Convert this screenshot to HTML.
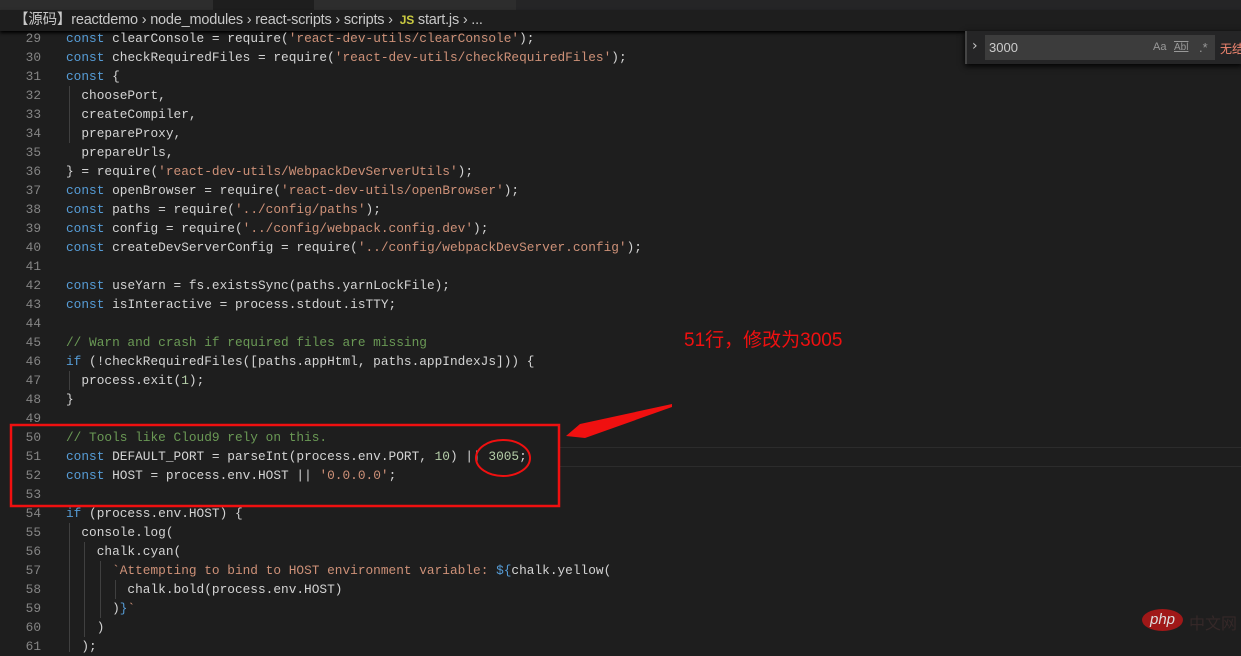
<!DOCTYPE html><html><head><meta charset="utf-8"><style>
body{margin:0;width:1241px;height:652px;background:#1e1e1e;overflow:hidden;position:relative;font-family:"Liberation Mono",monospace}
.tabs{position:absolute;left:0;top:0;width:1241px;height:10px;background:#252526}
.tabs div{position:absolute;top:0;height:10px;background:#2d2d2d;border-right:1px solid #252526}
.bc{position:absolute;left:0;top:10px;width:1241px;height:21px;background:#1e1e1e;box-shadow:0 2px 3px #000;font:14.5px "Liberation Sans","Noto Sans CJK SC",sans-serif;color:#c8c8c8;line-height:21px;padding-left:14px;box-sizing:border-box;letter-spacing:-.2px;white-space:nowrap}
.l{position:absolute;left:0;height:19px;line-height:19px;font-size:12.8px;white-space:pre;color:#d4d4d4}
.n{position:absolute;left:0;width:41px;text-align:right;color:#858585}
.c{position:absolute;left:66px}
.k{color:#569cd6}.s{color:#ce9178}.m{color:#6a9955}.d{color:#b5cea8}
.g{position:absolute;width:1px;background:#404040}
</style></head><body>
<div class="tabs"><div style="left:0;width:99px"></div><div style="left:99px;width:114px"></div><div style="left:213px;width:101px;background:#1e1e1e"></div><div style="left:314px;width:101px"></div><div style="left:415px;width:101px"></div></div>
<div class="bc">【源码】reactdemo › node_modules › react-scripts › scripts › <span style="color:#cbcb41;font-weight:bold;font-size:12px">&nbsp;JS</span> start.js › ...</div>
<div style="position:absolute;left:560px;top:447px;width:681px;height:18px;border-top:1px solid #2c2c2c;border-bottom:1px solid #2c2c2c"></div>
<div class="g" style="left:69px;top:86px;height:57px"></div>
<div class="g" style="left:69px;top:371px;height:19px"></div>
<div class="g" style="left:69px;top:523px;height:129px"></div>
<div class="g" style="left:84px;top:542px;height:95px"></div>
<div class="g" style="left:100px;top:561px;height:57px"></div>
<div class="g" style="left:115px;top:580px;height:19px"></div>
<div class="l" style="top:29px"><span class="n">29</span><span class="c"><span class="k">const</span> clearConsole = require(<span class="s">'react-dev-utils/clearConsole'</span>);</span></div>
<div class="l" style="top:48px"><span class="n">30</span><span class="c"><span class="k">const</span> checkRequiredFiles = require(<span class="s">'react-dev-utils/checkRequiredFiles'</span>);</span></div>
<div class="l" style="top:67px"><span class="n">31</span><span class="c"><span class="k">const</span> {</span></div>
<div class="l" style="top:86px"><span class="n">32</span><span class="c">  choosePort,</span></div>
<div class="l" style="top:105px"><span class="n">33</span><span class="c">  createCompiler,</span></div>
<div class="l" style="top:124px"><span class="n">34</span><span class="c">  prepareProxy,</span></div>
<div class="l" style="top:143px"><span class="n">35</span><span class="c">  prepareUrls,</span></div>
<div class="l" style="top:162px"><span class="n">36</span><span class="c">} = require(<span class="s">'react-dev-utils/WebpackDevServerUtils'</span>);</span></div>
<div class="l" style="top:181px"><span class="n">37</span><span class="c"><span class="k">const</span> openBrowser = require(<span class="s">'react-dev-utils/openBrowser'</span>);</span></div>
<div class="l" style="top:200px"><span class="n">38</span><span class="c"><span class="k">const</span> paths = require(<span class="s">'../config/paths'</span>);</span></div>
<div class="l" style="top:219px"><span class="n">39</span><span class="c"><span class="k">const</span> config = require(<span class="s">'../config/webpack.config.dev'</span>);</span></div>
<div class="l" style="top:238px"><span class="n">40</span><span class="c"><span class="k">const</span> createDevServerConfig = require(<span class="s">'../config/webpackDevServer.config'</span>);</span></div>
<div class="l" style="top:257px"><span class="n">41</span></div>
<div class="l" style="top:276px"><span class="n">42</span><span class="c"><span class="k">const</span> useYarn = fs.existsSync(paths.yarnLockFile);</span></div>
<div class="l" style="top:295px"><span class="n">43</span><span class="c"><span class="k">const</span> isInteractive = process.stdout.isTTY;</span></div>
<div class="l" style="top:314px"><span class="n">44</span></div>
<div class="l" style="top:333px"><span class="n">45</span><span class="c"><span class="m">// Warn and crash if required files are missing</span></span></div>
<div class="l" style="top:352px"><span class="n">46</span><span class="c"><span class="k">if</span> (!checkRequiredFiles([paths.appHtml, paths.appIndexJs])) {</span></div>
<div class="l" style="top:371px"><span class="n">47</span><span class="c">  process.exit(<span class="d">1</span>);</span></div>
<div class="l" style="top:390px"><span class="n">48</span><span class="c">}</span></div>
<div class="l" style="top:409px"><span class="n">49</span></div>
<div class="l" style="top:428px"><span class="n">50</span><span class="c"><span class="m">// Tools like Cloud9 rely on this.</span></span></div>
<div class="l" style="top:447px"><span class="n">51</span><span class="c"><span class="k">const</span> DEFAULT_PORT = parseInt(process.env.PORT, <span class="d">10</span>) || <span class="d">3005</span>;</span></div>
<div class="l" style="top:466px"><span class="n">52</span><span class="c"><span class="k">const</span> HOST = process.env.HOST || <span class="s">'0.0.0.0'</span>;</span></div>
<div class="l" style="top:485px"><span class="n">53</span></div>
<div class="l" style="top:504px"><span class="n">54</span><span class="c"><span class="k">if</span> (process.env.HOST) {</span></div>
<div class="l" style="top:523px"><span class="n">55</span><span class="c">  console.log(</span></div>
<div class="l" style="top:542px"><span class="n">56</span><span class="c">    chalk.cyan(</span></div>
<div class="l" style="top:561px"><span class="n">57</span><span class="c">      <span class="s">`Attempting to bind to HOST environment variable: </span><span class="k">${</span>chalk.yellow(</span></div>
<div class="l" style="top:580px"><span class="n">58</span><span class="c">        chalk.bold(process.env.HOST)</span></div>
<div class="l" style="top:599px"><span class="n">59</span><span class="c">      )<span class="k">}</span><span class="s">`</span></span></div>
<div class="l" style="top:618px"><span class="n">60</span><span class="c">    )</span></div>
<div class="l" style="top:637px"><span class="n">61</span><span class="c">  );</span></div>
<div style="position:absolute;left:965px;top:31px;width:276px;height:33px;background:#252526;border-left:2px solid #454545;box-shadow:0 2px 6px #000"></div>
<div style="position:absolute;left:972px;top:38px;color:#c5c5c5;font:14px 'DejaVu Sans',sans-serif">›</div>
<div style="position:absolute;left:985px;top:35px;width:230px;height:25px;background:#3c3c3c;font:13px 'Liberation Sans',sans-serif;color:#ccc;line-height:25px;padding-left:4px;box-sizing:border-box">3000<span style="position:absolute;left:168px;color:#999;font-size:11px">Aa</span><span style="position:absolute;left:189px;color:#999;font-size:10px;text-decoration:underline overline">Abl</span><span style="position:absolute;left:214px;color:#999">.*</span></div>
<div style="position:absolute;left:1220px;top:40px;color:#f48771;font:12px 'Liberation Sans','Noto Sans CJK SC',sans-serif;white-space:nowrap">无结</div>
<svg style="position:absolute;left:0;top:0" width="1241" height="652"><rect x="11" y="425" width="548" height="81" fill="none" stroke="#f01010" stroke-width="2.5"/><ellipse cx="503" cy="458" rx="27" ry="18" fill="none" stroke="#f01010" stroke-width="2"/><polygon points="672,404 672,407 585,438 566,436 580,424" fill="#f01010"/></svg>
<div style="position:absolute;left:684px;top:325px;color:#f01010;font:19px 'Liberation Sans','Noto Sans CJK SC',sans-serif">51行，修改为3005</div>
<div style="position:absolute;left:1142px;top:609px;width:41px;height:22px;border-radius:50%;background:#a01818;color:#ddd;font:italic 15px 'Liberation Sans',sans-serif;text-align:center;line-height:21px">php</div>
<div style="position:absolute;left:1189px;top:610px;color:#352828;font:16px 'Noto Sans CJK SC',sans-serif">中文网</div>
</body></html>
